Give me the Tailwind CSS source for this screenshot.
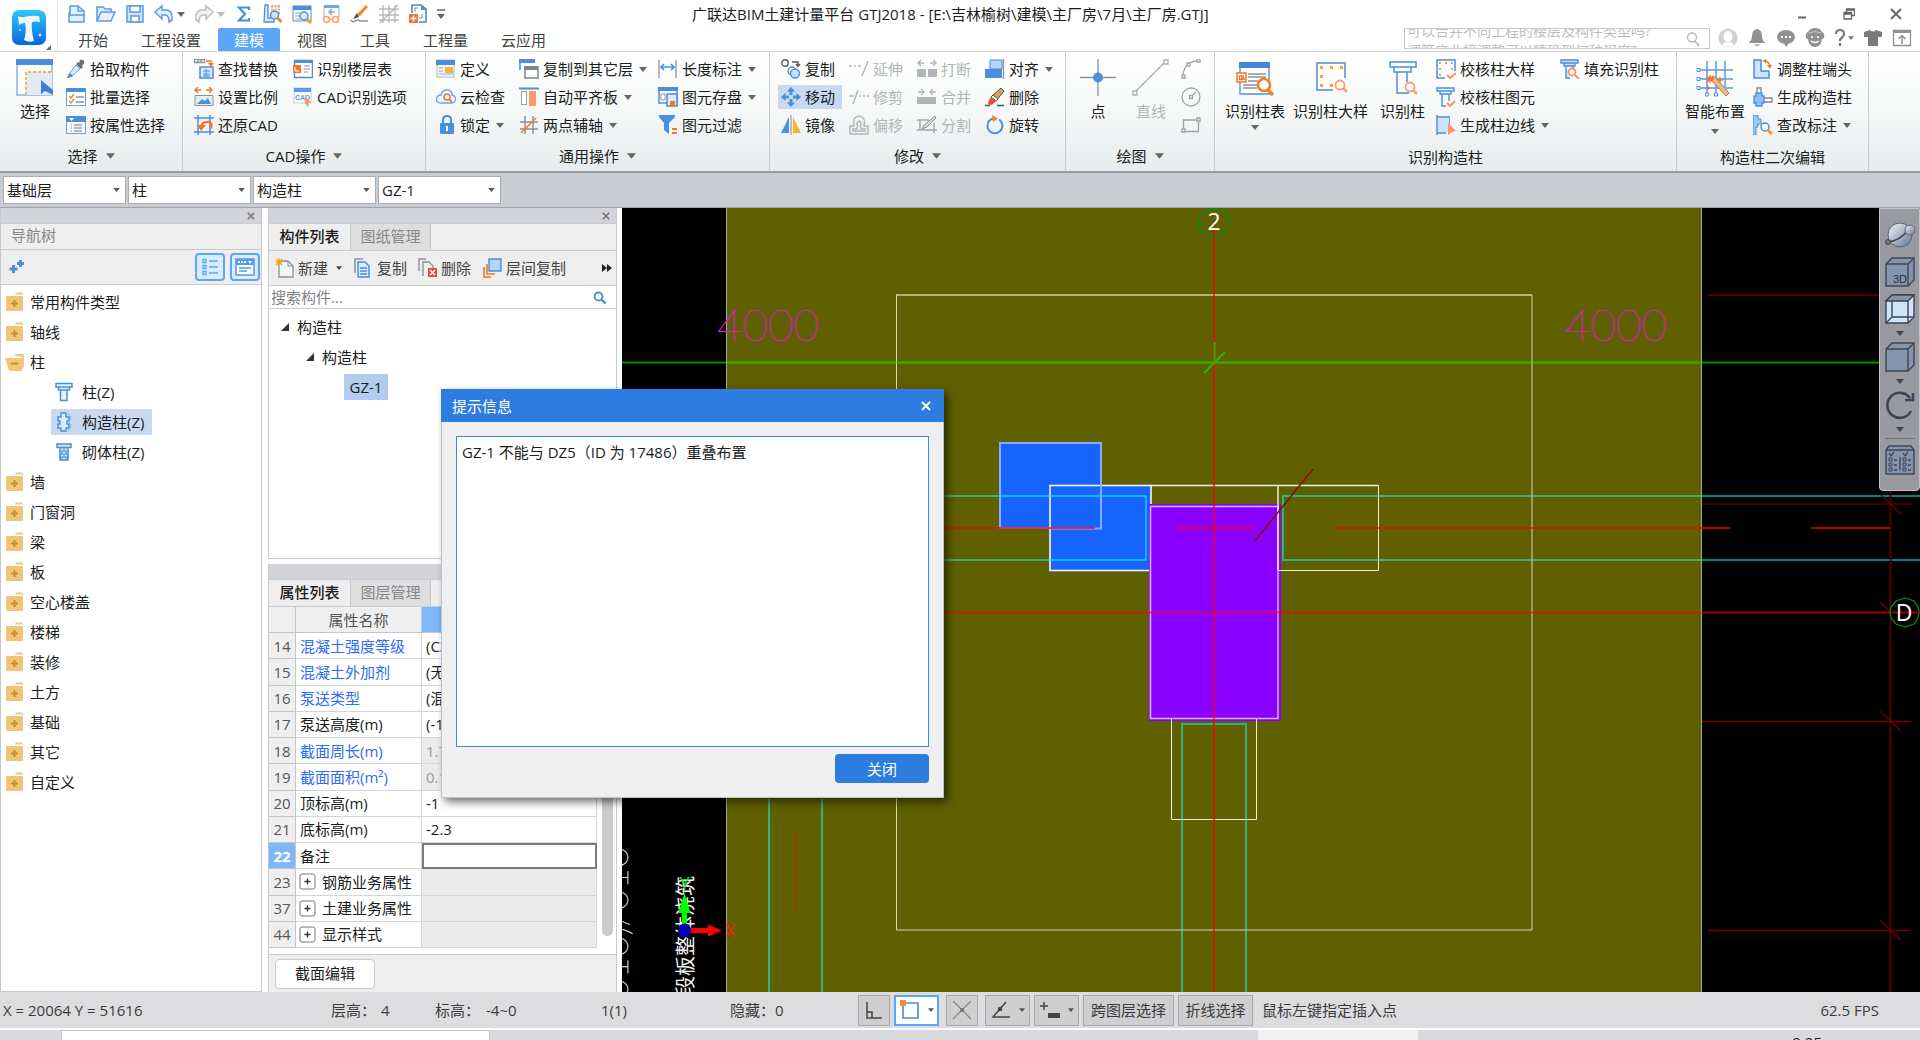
<!DOCTYPE html>
<html lang="zh-CN">
<head>
<meta charset="utf-8">
<title>广联达BIM土建计量平台 GTJ2018</title>
<script src="https://cdn.jsdelivr.net/npm/@tailwindcss/browser@4"></script>
</head>
<body class="h-screen overflow-hidden flex flex-col bg-white text-[15px] leading-5 text-[#1c1c1c] font-['Open_Sans','Noto_Sans_CJK_SC',sans-serif] whitespace-nowrap">

<!-- shared glyphs -->
<svg class="hidden" aria-hidden="true">
  <symbol id="caret" viewBox="0 0 8 5"><path d="M0 0h8L4 5z" fill="currentColor"/></symbol>
  <symbol id="folder" viewBox="0 0 20 20"><path d="M10 2l1-1.500h6l1.500 2h-8.500z" fill="#e9c98c"/><rect x="1" y="4" width="17" height="15" rx="1" fill="#efc578"/><path d="M9.500 8v7M6 11.500h7" stroke="#c98f2b" stroke-width="2.200"/></symbol>
  <symbol id="folderopen" viewBox="0 0 20 20"><path d="M9 4l2-2h8v13l-2 2V5z" fill="#e9c98c"/><path d="M0 6h17v13H4z" fill="#efc578"/><path d="M6 11.500h7" stroke="#c98f2b" stroke-width="2"/></symbol>
  <symbol id="column" viewBox="0 0 20 20"><path d="M2 1.500h16v3.500H2zM4.500 5h11v3h-11zM6.500 8h6.500v10.500H6.500z" fill="#eaf3fd" stroke="#4a8fdc" stroke-width="1.500"/></symbol>
  <symbol id="plusbox" viewBox="0 0 17 17"><rect x="1" y="1" width="15" height="15" rx="2" fill="#fff" stroke="#777"/><path d="M8.500 5.500v6M5.500 8.500h6" stroke="#333" stroke-width="1.300"/></symbol>
  <symbol id="cross" viewBox="0 0 10 10"><path d="M1 1l8 8M9 1L1 9" stroke="currentColor" stroke-width="2"/></symbol>
</svg>

<header class="h-[52px] shrink-0 flex border-b border-[#d4d6d8]">
  <div class="w-[58px] shrink-0 pl-3 pt-2.5 border-r border-[#ececec]">
    <svg class="w-10 h-10" viewBox="0 0 40 40"><defs><linearGradient id="lg" x1="0" y1="0" x2="0" y2="1"><stop offset="0" stop-color="#2fc8fb"/><stop offset="1" stop-color="#0a66dd"/></linearGradient></defs><rect x="0" y="0" width="34" height="35" rx="7" fill="url(#lg)"/><path d="M6 6q3 2 6 1 8-2 15-1l1 6q-4-1-8 0-1 8 2 19-5 2-10-1 3-9 1-17-4 0-6 2z" fill="#eef8ff"/><circle cx="8" cy="20" r="1" fill="#bfe6ff"/><circle cx="28" cy="25" r="1.500" fill="#bfe6ff"/><path d="M39 35v5h-5z" fill="#666"/></svg>
  </div>
  <div class="flex-1 flex flex-col min-w-0">
    <div class="h-7 flex items-center">
      <div class="w-[634px] shrink-0 pl-[9px] flex items-center gap-[9px]">
        <button aria-label="新建"><svg class="block w-5 h-5" viewBox="0 0 20 20"><path d="M3 2h8l6 5v11H2V9h1z" fill="#e3effc" stroke="#5b9be4" stroke-width="1.500"/><path d="M11 2v5h6M2 11h16" fill="none" stroke="#5b9be4" stroke-width="1.500"/></svg></button>
        <button aria-label="打开"><svg class="block w-5 h-5" viewBox="0 0 20 20"><path d="M1 17V3h6l2 2h6v3h4l-4 9zM1 17L5 8h11" fill="#e3effc" stroke="#5b9be4" stroke-width="1.500"/></svg></button>
        <button aria-label="保存"><svg class="block w-5 h-5" viewBox="0 0 20 20"><path d="M2 2h16v16H2z" fill="#cfe2f8" stroke="#5b9be4" stroke-width="1.500"/><path d="M5 2h10v6H5zM6 12h8v6H6z" fill="#fff" stroke="#5b9be4" stroke-width="1.500"/></svg></button>
        <div class="flex items-center gap-[3px] text-[#666]"><button aria-label="撤销"><svg class="block w-5 h-5" viewBox="0 0 20 20"><path d="M1 8l7-6v4h5q6 1 5 10l-3 2q0-7-4-7H8v4z" fill="#e3effc" stroke="#5b9be4" stroke-width="1.500"/></svg></button><svg class="w-2 h-[5px]"><use href="#caret"/></svg></div>
        <div class="flex items-center gap-[3px] text-[#bbb]"><button aria-label="重做"><svg class="block w-5 h-5" viewBox="0 0 20 20"><path d="M19 8l-7-6v4H7q-6 1-5 10l3 2q0-7 4-7h3v4z" fill="#f2f2f2" stroke="#b9bcc0" stroke-width="1.500"/></svg></button><svg class="w-2 h-[5px]"><use href="#caret"/></svg></div>
        <button aria-label="汇总"><svg class="block w-5 h-5" viewBox="0 0 20 20"><path d="M15 6V3.500H5L11 10l-6 6.500h10V14" fill="none" stroke="#4a8fdc" stroke-width="2.200"/></svg></button>
        <button aria-label="查看计算式"><svg class="block w-5 h-5" viewBox="0 0 20 20"><path d="M2 1h3v13h6v4H1z" fill="#dceafb" stroke="#4a8fdc" stroke-width="1.300"/><rect x="8" y="1" width="9" height="9" fill="#f7a578"/><path d="M8 4h9M8 7h9M11 1v9M14 1v9" stroke="#fff"/><circle cx="11.500" cy="11" r="4" fill="#cfe2f8" stroke="#4a8fdc" stroke-width="1.500"/><path d="M14.500 14l4 4" stroke="#f08a24" stroke-width="3"/></svg></button>
        <button aria-label="查看工程量"><svg class="block w-5 h-5" viewBox="0 0 20 20"><rect x="1" y="2" width="18" height="15" fill="#fff" stroke="#4a8fdc"/><path d="M1 2h18v4H1z" fill="#4a8fdc"/><path d="M3 9h6M3 12h5M3 15h5" stroke="#9aa"/><circle cx="12" cy="12" r="4" fill="#dceafb" stroke="#4a8fdc" stroke-width="1.500"/><path d="M15 15l4 4" stroke="#f7a021" stroke-width="3"/></svg></button>
        <button aria-label="对比"><svg class="block w-5 h-5" viewBox="0 0 20 20"><path d="M3 13V2h15v11" fill="none" stroke="#8cb8ea"/><path d="M3 1h15v3H3z" fill="#6aa6e8"/><path d="M14 8H8m3-3L8 8l3 3" fill="none" stroke="#9aa3ad" stroke-width="1.500"/><circle cx="5.500" cy="15.500" r="3" fill="none" stroke="#ff9a66" stroke-width="1.500"/><circle cx="14.500" cy="15.500" r="3" fill="none" stroke="#ff9a66" stroke-width="1.500"/><path d="M8 15h4" stroke="#ff9a66"/></svg></button>
        <button aria-label="画笔"><svg class="block w-5 h-5" viewBox="0 0 20 20"><path d="M16 1l2 2-8 9-4-1z" fill="#f58a2c"/><path d="M7 9l-4 6 6-2z" fill="#555"/><path d="M1 16q2 3 4 1t5 0h8" fill="none" stroke="#8d959c" stroke-width="1.500"/></svg></button>
        <button aria-label="轴网"><svg class="block w-5 h-5" viewBox="0 0 20 20"><path d="M4 1v18M10 1v18M16 1v18M0 5h20M0 11h20M0 16h20M1 19L19 1" stroke="#b5b8bb" stroke-width="1.300"/></svg></button>
        <button aria-label="插入图纸"><svg class="block w-5 h-5" viewBox="0 0 20 20"><path d="M4 9V1h9l5 4v13h-7" fill="#fff" stroke="#4a8fdc" stroke-width="1.600"/><path d="M13 1v5h5z" fill="#4a8fdc"/><path d="M7 8V4h3M14 10v4h-3" fill="none" stroke="#7d8790"/><rect x="1" y="10" width="9" height="9" fill="#f2762a"/><path d="M5.500 11.500v6M2.500 14.500h6" stroke="#fff" stroke-width="1.500"/></svg></button>
        <svg class="w-2 h-3 text-[#666]" viewBox="0 0 8 12"><path d="M0 2h8" stroke="currentColor" stroke-width="1.500"/><path d="M0 6h8l-4 5z" fill="currentColor"/></svg>
      </div>
      <h1>广联达BIM土建计量平台 GTJ2018 - [E:\吉林榆树\建模\主厂房\7月\主厂房.GTJ]</h1>
      <div class="ml-auto pr-[18px] flex items-center gap-[35px] text-[#666]">
        <button aria-label="最小化"><svg class="block w-3 h-3" viewBox="0 0 12 12"><path d="M2 9.500h8" stroke="currentColor" stroke-width="2"/></svg></button>
        <button aria-label="还原"><svg class="block w-3 h-3" viewBox="0 0 12 12"><path d="M3.500 4V1h8v6.500H9M1 4.500h7.500V11H1zM1 6h8M3.500 2h8" fill="none" stroke="currentColor" stroke-width="1.300"/></svg></button>
        <button aria-label="关闭"><svg class="block w-3 h-3" viewBox="0 0 12 12"><path d="M1 1l10 10M11 1L1 11" stroke="currentColor" stroke-width="1.800"/></svg></button>
      </div>
    </div>
    <div class="h-[23px] flex">
      <nav class="pl-1 flex gap-px leading-[22px] text-[#444]">
        <button class="px-4">开始</button><button class="px-4">工程设置</button><button class="px-4 bg-[#5aa7f7] text-white rounded-t-xs">建模</button><button class="px-4">视图</button><button class="px-4">工具</button><button class="px-4">工程量</button><button class="px-4">云应用</button>
      </nav>
      <div class="ml-auto pr-2 flex items-start gap-2">
        <label class="relative w-[306px] h-[21px] flex border border-[#c9cbcd] overflow-hidden">
          <span class="absolute left-0.5 -top-2 text-sm leading-5 text-[#bcbec0]">可以合并不同工程的楼层及构件类型吗?<br>调筋底业接调整可以精确到何种程度?</span>
          <input type="text" aria-label="搜索帮助" class="w-full bg-transparent outline-none">
          <svg class="absolute right-2 top-0.5 w-4 h-4" viewBox="0 0 16 16"><circle cx="7" cy="6.500" r="4.500" fill="none" stroke="#b5b8bb" stroke-width="1.400"/><path d="M10 10l4 5" stroke="#b5b8bb" stroke-width="1.800"/></svg>
        </label>
        <div class="flex items-center gap-[9px]">
          <button aria-label="用户"><svg class="block w-5 h-5" viewBox="0 0 20 20"><circle cx="10" cy="10" r="9.500" fill="#cfd0d2"/><ellipse cx="10" cy="8.500" rx="4.500" ry="5.500" fill="#fff"/><path d="M4 18q1-4 6-4t6 4q-6 3-12 0z" fill="#fff"/></svg></button>
          <button aria-label="通知"><svg class="block w-5 h-5" viewBox="0 0 20 20"><path d="M10 1q5 1 5 7 0 4 3 7H2q3-3 3-7 0-6 5-7z" fill="#8f9193"/><path d="M7 16.500h6q-3 3-6 0z" fill="#8f9193"/></svg></button>
          <button aria-label="消息"><svg class="block w-5 h-5" viewBox="0 0 20 20"><ellipse cx="10" cy="9" rx="9" ry="7" fill="#8f9193"/><path d="M8 15l2 4 3-4z" fill="#8f9193"/><path d="M5 9h2M9 9h2M13 9h2" stroke="#fff" stroke-width="2"/></svg></button>
          <button aria-label="客服"><svg class="block w-5 h-5" viewBox="0 0 20 20"><path d="M3 4q2-4 7-4t7 4q3 1 2 6l-2 1q-1 8-7 8t-7-8l-2-1Q0 5 3 4z" fill="#8f9193"/><path d="M4 5q6-3 12 0" fill="none" stroke="#c9cacc"/><path d="M6 9h2M12 9h2M6 13q4 3 8 0" fill="none" stroke="#fff" stroke-width="1.500"/></svg></button>
          <button aria-label="帮助" class="flex items-center text-[#77797b]"><svg class="block w-3 h-5" viewBox="0 0 12 20"><path d="M2 6q0-4 4-4t4 4q0 2-2 3.500t-2 3.500M6 15v3" fill="none" stroke="currentColor" stroke-width="2.200"/></svg><svg class="w-1.5 h-1 ml-0.5"><use href="#caret"/></svg></button>
          <button aria-label="皮肤"><svg class="block w-5 h-5" viewBox="0 0 20 20"><path d="M1 4l6-2q3 3 6 0l6 2v5h-4v9H5V9H1z" fill="#77797b"/></svg></button>
          <button aria-label="收起功能区"><svg class="block w-5 h-5" viewBox="0 0 20 20"><path d="M1.500 2.500h17v15h-17z" fill="none" stroke="#8f9193" stroke-width="1.300"/><path d="M1 2h18v3H1z" fill="#8f9193"/><path d="M10 16V8M6.500 11L10 7.500l3.500 3.500" fill="none" stroke="#8f9193" stroke-width="1.500"/></svg></button>
        </div>
      </div>
    </div>
  </div>
</header>

<!-- ribbon -->
<div class="h-[121px] shrink-0 flex bg-linear-to-b from-white via-[#f6f8f8] to-[#e6ebec] border-b-2 border-[#979a9e]">

  <section class="w-[183px] shrink-0 pt-[3px] border-r border-[#c9cccf]">
    <div class="h-[84px] flex gap-3 pl-4">
      <button class="w-[38px] pt-1 flex flex-col items-center leading-7">
        <svg class="w-[38px] h-[38px]" viewBox="0 0 38 38"><rect x="1" y="1" width="35" height="35" fill="#fff" stroke="#4a8fdc"/><path d="M0 0h37v6H0z" fill="#4a8fdc"/><path d="M10 13h26v23H10z" fill="#e4e9f5"/><path d="M10 36V13h26" fill="none" stroke="#f2b53a" stroke-width="1.800" stroke-dasharray="3 2"/><path d="M25 21v14l4-3 8 4V31z" fill="#3f7fd0"/></svg>选择</button>
      <div class="flex flex-col">
        <button class="h-7 flex items-center gap-1"><svg class="w-5 h-5" viewBox="0 0 20 20"><path d="M14 1q3-1 4 1t-2 5l1 1-2 2-5-5 2-2 1 1z" fill="#6b7074"/><path d="M10 6l4 4-8 7-4 1 1-3z" fill="#d6e9fb" stroke="#7aa7d6"/><path d="M4 14l3 3-4 2H1z" fill="#4a8fdc"/></svg>拾取构件</button>
        <button class="h-7 flex items-center gap-1"><svg class="w-5 h-5" viewBox="0 0 20 20"><rect x=".5" y="1.500" width="19" height="17" fill="#fff" stroke="#6f9fd6"/><path d="M0 1h20v4H0z" fill="#4a8fdc"/><path d="M3 9l2 2 3-4M3 14l2 2 3-4" fill="none" stroke="#f08a24" stroke-width="1.400"/><path d="M10 10h8M10 15h8" stroke="#8b9299" stroke-width="1.300"/></svg>批量选择</button>
        <button class="h-7 flex items-center gap-1"><svg class="w-5 h-5" viewBox="0 0 20 20"><rect x=".5" y="1.500" width="19" height="17" fill="#f5f9fe" stroke="#6f9fd6"/><path d="M0 1h20v6H0z" fill="#4a8fdc"/><path d="M3 3h5l-2.500 3z" fill="#fff"/><path d="M8 10h8M8 13h8M8 16h8M5 10h1M5 13h1M5 16h1" stroke="#777" stroke-width="1.200"/></svg>按属性选择</button>
      </div>
    </div>
    <button class="w-full h-[33px] flex items-center justify-center gap-2">选择<svg class="w-[9px] h-1.5 text-[#666]"><use href="#caret"/></svg></button>
  </section>

  <section class="w-[243px] shrink-0 pt-[3px] border-r border-[#c9cccf]">
    <div class="h-[84px] flex gap-[15px] pl-[11px]">
      <div class="flex flex-col">
        <button class="h-7 flex items-center gap-1"><svg class="w-5 h-5" viewBox="0 0 20 20"><path d="M.5.500h10v3H.5zM4 0v4M7 0v4" fill="none" stroke="#8b9299" stroke-width="1.300"/><path d="M12 2h5v4" fill="none" stroke="#f2762a" stroke-width="1.400"/><path d="M14 4h6l-3 4z" fill="#f2762a"/><rect x="6" y="8" width="13" height="11" fill="#dceafb" stroke="#4a8fdc" stroke-width="1.500"/><path d="M9 12h7M9 15h7M9 17h7M12 10v8" stroke="#4a8fdc"/></svg>查找替换</button>
        <button class="h-7 flex items-center gap-1"><svg class="w-5 h-5" viewBox="0 0 20 20"><path d="M1 3h6M4 0L1 3l3 3M12 3h6M15 0l3 3-3 3" fill="none" stroke="#f2762a" stroke-width="1.400"/><path d="M1 8.500h18v10H1z" fill="#e9eef4" stroke="#8b9299"/><path d="M3 17l5-5 3 2 3-3 3 6z" fill="#4a8fdc"/></svg>设置比例</button>
        <button class="h-7 flex items-center gap-1"><svg class="w-5 h-5" viewBox="0 0 20 20"><path d="M4 0v20M16 0v20M0 3h20M0 17h20" stroke="#4a8fdc" stroke-width="1.500"/><path d="M7 12q1-6 9-5 3 3 0 7" fill="none" stroke="#f2762a" stroke-width="2.400"/><path d="M3 10h9l-5 6z" fill="#f2762a"/></svg>还原CAD</button>
      </div>
      <div class="flex flex-col">
        <button class="h-7 flex items-center gap-1"><svg class="w-5 h-5" viewBox="0 0 20 20"><rect x="1.500" y="1.500" width="18" height="17" fill="#fff" stroke="#4a8fdc" stroke-width="1.500"/><path d="M1 1h19v3H1z" fill="#4a8fdc"/><rect x="0" y="6" width="8" height="8" fill="#f2762a"/><path d="M11 7h6M11 10h6M11 13h4" stroke="#8b9299"/><path d="M2 8v4h4" stroke="#fff" fill="none"/></svg>识别楼层表</button>
        <button class="h-7 flex items-center gap-1"><svg class="w-5 h-5" viewBox="0 0 20 20"><rect x="1" y="1" width="17" height="15" fill="#fff" stroke="#b9d2ef"/><path d="M1 1h17v4H1z" fill="#5b9be4"/><text x="2" y="13" font-size="7" font-weight="bold" fill="#5b9be4" font-family="Liberation Sans">CAD</text><path d="M12 10l6 5-3 1 1 3-2 .500-1-3-1 1z" fill="#ff9068"/></svg>CAD识别选项</button>
      </div>
    </div>
    <button class="w-full h-[33px] flex items-center justify-center gap-2">CAD操作<svg class="w-[9px] h-1.5 text-[#666]"><use href="#caret"/></svg></button>
  </section>

  <section class="w-[344px] shrink-0 pt-[3px] border-r border-[#c9cccf]">
    <div class="h-[84px] flex pl-2.5">
      <div class="w-[83px] flex flex-col">
        <button class="h-7 flex items-center gap-1"><svg class="w-5 h-5" viewBox="0 0 20 20"><rect x="1" y="1" width="17" height="17" fill="#f3f5f8" stroke="#b5bcc4"/><path d="M0 1h19v5H0z" fill="#4a8fdc"/><path d="M3 9h4M3 12h4M3 15h14" stroke="#9aa3ad"/><rect x="9" y="8" width="8" height="6" fill="#f7b23b"/></svg>定义</button>
        <button class="h-7 flex items-center gap-1"><svg class="w-5 h-5" viewBox="0 0 20 20"><path d="M5 16q-5 0-4.500-4T5 8q1-5 6-5t5 5q4 1 3.500 4.500T16 16z" fill="#eef6ff" stroke="#5aa7f7" stroke-width="1.300"/><circle cx="11" cy="10" r="3" fill="none" stroke="#f2762a" stroke-width="1.500"/><path d="M13 12l3 3" stroke="#f2762a" stroke-width="1.800"/></svg>云检查</button>
        <button class="h-7 flex items-center gap-1"><svg class="w-5 h-5" viewBox="0 0 20 20"><path d="M7 9V5q0-4 4-4t4 4v4" fill="none" stroke="#4a8fdc" stroke-width="2"/><rect x="4" y="8" width="14" height="11" rx="1" fill="#4a8fdc"/><path d="M11 11v5" stroke="#fff" stroke-width="2"/></svg>锁定<svg class="w-2 h-[5px] ml-0.5 text-[#666]"><use href="#caret"/></svg></button>
      </div>
      <div class="w-[139px] flex flex-col">
        <button class="h-7 flex items-center gap-1"><svg class="w-5 h-5" viewBox="0 0 20 20"><path d="M1 11V1h14v3" fill="#fff" stroke="#4a8fdc" stroke-width="1.600"/><path d="M0 0h16v4H0z" fill="#4a8fdc"/><rect x="6" y="8" width="13" height="11" fill="#fff" stroke="#7d8790" stroke-width="1.500"/><path d="M5 7h14v4H5z" fill="#7d8790"/></svg>复制到其它层<svg class="w-2 h-[5px] ml-0.5 text-[#666]"><use href="#caret"/></svg></button>
        <button class="h-7 flex items-center gap-1"><svg class="w-5 h-5" viewBox="0 0 20 20"><path d="M0 1.500h20" stroke="#4a8fdc" stroke-width="2"/><rect x="2.500" y="4.500" width="5" height="13" fill="#fff" stroke="#9aa3ad"/><rect x="10" y="4" width="7" height="15" fill="#f99a6c"/></svg>自动平齐板<svg class="w-2 h-[5px] ml-0.5 text-[#666]"><use href="#caret"/></svg></button>
        <button class="h-7 flex items-center gap-1"><svg class="w-5 h-5" viewBox="0 0 20 20"><path d="M6 1v18M14 1v18M1 7h18M1 14h18" stroke="#8b9299" stroke-width="1.500"/><path d="M2 18L17 3" stroke="#f2762a" stroke-width="1.500"/></svg>两点辅轴<svg class="w-2 h-[5px] ml-0.5 text-[#666]"><use href="#caret"/></svg></button>
      </div>
      <div class="flex flex-col">
        <button class="h-7 flex items-center gap-1"><svg class="w-5 h-5" viewBox="0 0 20 20"><path d="M1 1v18M18 1v18" stroke="#9aa3ad" stroke-width="1.500"/><path d="M3 8h13M6 5L3 8l3 3M13 5l3 3-3 3" fill="none" stroke="#4a8fdc" stroke-width="1.700"/></svg>长度标注<svg class="w-2 h-[5px] ml-0.5 text-[#666]"><use href="#caret"/></svg></button>
        <button class="h-7 flex items-center gap-1"><svg class="w-5 h-5" viewBox="0 0 20 20"><path d="M1 1h18v15H1z" fill="#fff" stroke="#4a8fdc" stroke-width="1.500"/><path d="M0 0h20v4H0z" fill="#4a8fdc"/><path d="M3 7h4v6H3z" fill="none" stroke="#8b9299"/><path d="M9 7h10v12H9z" fill="#dceafb" stroke="#4a8fdc" stroke-width="1.500"/><path d="M12 14h5v5h-5z" fill="#f2762a"/></svg>图元存盘<svg class="w-2 h-[5px] ml-0.5 text-[#666]"><use href="#caret"/></svg></button>
        <button class="h-7 flex items-center gap-1"><svg class="w-5 h-5" viewBox="0 0 20 20"><path d="M1 0h16v2l-6 6v11l-5-4V8L1 2z" fill="#4a8fdc"/><path d="M14 14h5M14 18h5" stroke="#f2762a" stroke-width="1.800"/></svg>图元过滤</button>
      </div>
    </div>
    <button class="w-full h-[33px] flex items-center justify-center gap-2">通用操作<svg class="w-[9px] h-1.5 text-[#666]"><use href="#caret"/></svg></button>
  </section>

  <section class="w-[296px] shrink-0 pt-[3px] border-r border-[#c9cccf]">
    <div class="h-[84px] pl-2 flex gap-0.5">
      <div class="w-[66px] flex flex-col">
        <button class="h-7 pl-[3px] flex items-center gap-1"><svg class="w-5 h-5" viewBox="0 0 20 20"><circle cx="4" cy="4" r="3.200" fill="#fff" stroke="#555" stroke-width="1.400"/><path d="M11 3h6v4M15 5l2 2.500L19 5" fill="none" stroke="#555" stroke-width="1.400"/><circle cx="11" cy="12" r="4" fill="#fff" stroke="#4a8fdc" stroke-width="1.400"/><circle cx="14" cy="14.500" r="4.500" fill="#bfe2fb" stroke="#4a8fdc" stroke-width="1.400"/></svg>复制</button>
        <button class="h-6 my-0.5 w-16 pl-[3px] flex items-center gap-1 bg-[#c8daf2]"><svg class="w-5 h-5" viewBox="0 0 20 20"><path d="M10 0l4 4.500h-2.500V8h-3V4.500H6zM10 20l-4-4.500h2.500V12h3v3.500H14zM0 10l4.500-4v2.500H8v3H4.500V14zM20 10l-4.500 4v-2.500H12v-3h3.500V6z" fill="#4a8fdc"/></svg>移动</button>
        <button class="h-7 pl-[3px] flex items-center gap-1"><svg class="w-5 h-5" viewBox="0 0 20 20"><path d="M8 2v16H0z" fill="#4a8fdc"/><path d="M10 0v20" stroke="#9aa3ad" stroke-width="1.300"/><path d="M12 2v16h8z" fill="#f7b52c"/></svg>镜像</button>
      </div>
      <div class="w-[66px] flex flex-col text-[#b2b5b8]">
        <button disabled class="h-7 pl-[3px] flex items-center gap-1"><svg class="w-5 h-5" viewBox="0 0 20 20" fill="none" stroke="#b2b5b8" stroke-width="1.400"><path d="M0 7h3M5 7h2M9 7h3M19 2l-6 15"/></svg>延伸</button>
        <button disabled class="h-7 pl-[3px] flex items-center gap-1"><svg class="w-5 h-5" viewBox="0 0 20 20" fill="none" stroke="#b2b5b8" stroke-width="1.400"><path d="M0 9h5M10 9h2M14 9h2M18 9h2M9 3L4 17"/></svg>修剪</button>
        <button disabled class="h-7 pl-[3px] flex items-center gap-1"><svg class="w-5 h-5" viewBox="0 0 20 20" fill="none" stroke="#b2b5b8" stroke-width="1.500"><path d="M5 11H1v8h18v-8h-4q2-9-5-10-7 1-5 10z"/><path d="M4 16h12v-2h-4q-1-3 0-6-2-4-4 0 1 3 0 6H4z"/></svg>偏移</button>
      </div>
      <div class="w-[66px] flex flex-col text-[#b2b5b8]">
        <button disabled class="h-7 pl-[3px] flex items-center gap-1"><svg class="w-5 h-5" viewBox="0 0 20 20"><path d="M0 10h9v8H0zM11 10h9v8h-9z" fill="#b2b5b8"/><path d="M1 4h6M4 1L1 4l3 3M19 4h-6M16 1l3 3-3 3" fill="none" stroke="#b2b5b8" stroke-width="1.400"/></svg>打断</button>
        <button disabled class="h-7 pl-[3px] flex items-center gap-1"><svg class="w-5 h-5" viewBox="0 0 20 20"><path d="M0 10h19v7H0z" fill="#b2b5b8"/><path d="M1 5h6M4 2l3 3-3 3M19 5h-6M16 2l-3 3 3 3" fill="none" stroke="#b2b5b8" stroke-width="1.400"/></svg>合并</button>
        <button disabled class="h-7 pl-[3px] flex items-center gap-1"><svg class="w-5 h-5" viewBox="0 0 20 20"><path d="M0 5h12M3 5v10M0 15h20M17 8v10" fill="none" stroke="#a5a8ab" stroke-width="1.500"/><path d="M18 1l-11 9-2 4 5-2L19 3z" fill="#d5d7d9" stroke="#8e9194"/></svg>分割</button>
      </div>
      <div class="flex flex-col">
        <button class="h-7 pl-[3px] flex items-center gap-1"><svg class="w-5 h-5" viewBox="0 0 20 20"><path d="M5 1h12v9H5z" fill="#b7d3f4" stroke="#4a8fdc"/><path d="M0 10h17v9H0z" fill="#4a8fdc"/><path d="M18.500 0v20" stroke="#8b9299" stroke-width="1.300"/></svg>对齐<svg class="w-2 h-[5px] ml-0.5 text-[#666]"><use href="#caret"/></svg></button>
        <button class="h-7 pl-[3px] flex items-center gap-1"><svg class="w-5 h-5" viewBox="0 0 20 20"><path d="M16 1l3 3-8 10-5-4z" fill="#d9a365" stroke="#6b4a25"/><path d="M8 8l5 4-2 2-5-4z" fill="#fff" stroke="#555"/><path d="M6 10l5 4q-3 4-6 4-4-1 1-8z" fill="#e2562f"/><path d="M0 18.500h5M12 18.500h7" stroke="#555" stroke-width="1.300"/></svg>删除</button>
        <button class="h-7 pl-[3px] flex items-center gap-1"><svg class="w-5 h-5" viewBox="0 0 20 20"><path d="M14 4.500A7.500 7.500 0 1 1 8 3.500" fill="none" stroke="#4a8fdc" stroke-width="1.900"/><path d="M7 0l6 3.500L8 7z" fill="#f08a24"/></svg>旋转</button>
      </div>
    </div>
    <button class="w-full h-[33px] flex items-center justify-center gap-2">修改<svg class="w-[9px] h-1.5 text-[#666]"><use href="#caret"/></svg></button>
  </section>

  <section class="w-[149px] shrink-0 pt-[3px] border-r border-[#c9cccf]">
    <div class="h-[84px] flex pl-3">
      <button class="w-10 pt-1 flex flex-col items-center leading-7"><svg class="w-[38px] h-[38px]" viewBox="0 0 38 38"><path d="M19 0v37M1 18.500h36" stroke="#8b9299" stroke-width="1.300"/><circle cx="19" cy="18.500" r="5" fill="#4a8fdc"/></svg>点</button>
      <button disabled class="w-10 ml-[13px] pt-1 flex flex-col items-center leading-7 text-[#b2b5b8]"><svg class="w-[38px] h-[38px]" viewBox="0 0 38 38" fill="none" stroke="#a9acaf" stroke-width="1.300"><path d="M4 32L32 4"/><path d="M1 32h4v4H1zM32 1h4v4h-4z"/></svg>直线</button>
      <div class="ml-2.5 flex flex-col">
        <button disabled aria-label="三点弧" class="h-7 flex items-center"><svg class="w-5 h-5" viewBox="0 0 20 20" fill="none" stroke="#a0a3a6" stroke-width="1.300"><path d="M2 16q1-8 5-10M9 4q3-2 7-2"/><path d="M1 16h3v3H1zM6 4h3v3H6zM16 0h3v3h-3z"/></svg></button>
        <button disabled aria-label="圆" class="h-7 flex items-center"><svg class="w-5 h-5" viewBox="0 0 20 20" fill="none" stroke="#a0a3a6" stroke-width="1.300"><circle cx="10" cy="10" r="9"/><path d="M8.500 8.500h3v3h-3zM11 9l4-4"/></svg></button>
        <button disabled aria-label="矩形" class="h-7 flex items-center"><svg class="w-5 h-5" viewBox="0 0 20 20" fill="none" stroke="#a0a3a6" stroke-width="1.300"><path d="M2.500 14V5h13M4 16.500h13.500V6"/><path d="M1 14h3v3H1zM16 3h3v3h-3z"/></svg></button>
      </div>
    </div>
    <button class="w-full h-[33px] flex items-center justify-center gap-2">绘图<svg class="w-[9px] h-1.5 text-[#666]"><use href="#caret"/></svg></button>
  </section>

  <section class="w-[462px] shrink-0 pt-[3px] border-r border-[#c9cccf]">
    <div class="h-[84px] flex pl-2.5">
      <button class="w-[60px] pt-1 flex flex-col items-center leading-7"><svg class="w-[38px] h-[38px]" viewBox="0 0 38 38"><path d="M4 4h29v31H4z" fill="#fff" stroke="#4a8fdc" stroke-width="1.300"/><path d="M3 3h31v6H3z" fill="#3f86dc"/><path d="M12 15h18M12 18h18M12 22h10M7 26h16M7 29h14" stroke="#8b9299" stroke-width="1.300"/><path d="M1 14h9v9H1z" fill="#fff" stroke="#f2762a" stroke-width="1.500"/><path d="M8 17H3.500v3.500H8V19H5" fill="none" stroke="#f2762a" stroke-width="1.300"/><circle cx="28" cy="26" r="6" fill="#fff" stroke="#f08025" stroke-width="2.500"/><path d="M32 31l5 5" stroke="#f08025" stroke-width="3.500"/></svg>识别柱表<svg class="w-2 h-[5px] shrink-0 text-[#666]"><use href="#caret"/></svg></button>
      <button class="w-[75px] ml-2 pt-1 flex flex-col items-center leading-7"><svg class="w-[38px] h-[38px]" viewBox="0 0 38 38"><path d="M33 19V4H5v27h16" fill="none" stroke="#4a8fdc" stroke-width="1.500"/><path d="M8 7h3v3H8zM18 7h3v3h-3zM28 7h3v3h-3zM8 16h3v3H8zM8 25h3v3H8zM18 25h3v3h-3z" fill="#f5a623"/><circle cx="28" cy="26" r="4.500" fill="#fff" stroke="#ff9a70" stroke-width="1.800"/><path d="M31 29l4 4" stroke="#ff9a70" stroke-width="2.500"/></svg>识别柱大样</button>
      <button class="w-[45px] ml-3 pt-1 flex flex-col items-center leading-7"><svg class="w-[38px] h-[38px]" viewBox="0 0 38 38" fill="none" stroke="#4a8fdc" stroke-width="1.500"><path d="M6 3h26v5H6zM10 8h17v5H10zM23 13v10M13 13v21h12"/><circle cx="26" cy="28" r="4.500" fill="#fff" stroke="#ff9a70" stroke-width="1.800"/><path d="M29 31l4 4" stroke="#ff9a70" stroke-width="2.500"/></svg>识别柱</button>
      <div class="w-[124px] ml-[11px] flex flex-col">
        <button class="h-7 flex items-center gap-1"><svg class="w-5 h-5" viewBox="0 0 20 20"><path d="M19 12V1H1v18h8" fill="none" stroke="#4a8fdc" stroke-width="1.500"/><path d="M3 3h2v2H3zM9 3h2v2H9zM15 3h2v2h-2zM3 9h2v2H3zM3 15h2v2H3zM15 9h2v2h-2z" fill="#f5a623"/><path d="M11 16l3 3 6-5" fill="none" stroke="#ff9068" stroke-width="1.800"/></svg>校核柱大样</button>
        <button class="h-7 flex items-center gap-1"><svg class="w-5 h-5" viewBox="0 0 20 20" fill="none" stroke="#4a8fdc" stroke-width="1.400"><path d="M1 1h17v3H1zM4 4h11v3H4zM6 7v12h4M13 7v7"/><path d="M11 16l3 3 5-5" stroke="#ff9068" stroke-width="1.800"/></svg>校核柱图元</button>
        <button class="h-7 flex items-center gap-1"><svg class="w-5 h-5" viewBox="0 0 20 20"><path d="M1 0v20M1 2h12v8M1 18h9" fill="none" stroke="#4a8fdc" stroke-width="1.500"/><path d="M2 3h11v14H2z" fill="#cfe2fb"/><path d="M12 8l8 8-4 1-4 3z" fill="#ff9068"/></svg>生成柱边线<svg class="w-2 h-[5px] ml-0.5 text-[#666]"><use href="#caret"/></svg></button>
      </div>
      <div class="flex flex-col">
        <button class="h-7 flex items-center gap-1"><svg class="w-5 h-5" viewBox="0 0 20 20"><path d="M1 1h17v3H1zM4 4h11v3H4zM6 7v12h4M13 7v4" fill="#cfe2fb" stroke="#4a8fdc" stroke-width="1.400"/><circle cx="12" cy="13" r="3.500" fill="#fff" stroke="#ff9068" stroke-width="1.800"/><path d="M15 16l4 4" stroke="#ff9068" stroke-width="2"/></svg>填充识别柱</button>
      </div>
    </div>
    <div class="h-[33px] pt-2 text-center">识别构造柱</div>
  </section>

  <section class="w-[192px] shrink-0 pt-[3px] border-r border-[#c9cccf]">
    <div class="h-[84px] flex pl-2">
      <button class="w-[60px] pt-1 flex flex-col items-center leading-7"><svg class="w-[38px] h-[38px]" viewBox="0 0 38 38"><path d="M11 2v32M20 2v32M29 2v26M3 11h34M3 20h34M3 29h34" stroke="#5b9be4" stroke-width="1.500"/><path d="M1 9.500h3v3H1zM1 18.500h3v3H1zM1 27.500h3v3H1zM9.500 34h3v3h-3zM18.500 34h3v3h-3z" fill="#fff" stroke="#4a8fdc"/><path d="M17 17l3 2 13 15-3 3-14-15z" fill="#e9b884" stroke="#b57b3d"/><path d="M14 16v8M10 20h8M11 17l6 6M17 17l-6 6M24 18v6M21 21h6M12 27v4M10 29h4" stroke="#f2762a" stroke-width="1.300"/></svg>智能布置<svg class="w-2 h-[5px] mt-1 shrink-0 text-[#666]"><use href="#caret"/></svg></button>
      <div class="ml-2 flex flex-col">
        <button class="h-7 flex items-center gap-1"><svg class="w-5 h-5" viewBox="0 0 20 20"><path d="M1 1h7v11h8v7H1z" fill="#cfe2fb" stroke="#4a8fdc" stroke-width="1.500"/><path d="M11 2q5 0 6 5" fill="none" stroke="#f2762a" stroke-width="1.500"/><path d="M14 6h5l-2 4zM9 2l4-2v4z" fill="#f2762a"/></svg>调整柱端头</button>
        <button class="h-7 flex items-center gap-1"><svg class="w-5 h-5" viewBox="0 0 20 20"><path d="M4 1h4v6H4zM10 11h9v4h-9z" fill="#fff" stroke="#7d8790" stroke-width="1.300"/><path d="M3 6h6v3h2v7H9v3H3v-3H1V9h2z" fill="#8fbdf2" stroke="#4a8fdc" stroke-width="1.300"/></svg>生成构造柱</button>
        <button class="h-7 flex items-center gap-1"><svg class="w-5 h-5" viewBox="0 0 20 20"><path d="M0 0h5v4h3v5H5v3H3v8H0z" fill="#9fc6f3" stroke="#4a8fdc"/><circle cx="12" cy="12" r="4" fill="#fff" stroke="#4a8fdc" stroke-width="1.500"/><path d="M15 15l4 4" stroke="#f7a021" stroke-width="3"/></svg>查改标注<svg class="w-2 h-[5px] ml-0.5 text-[#666]"><use href="#caret"/></svg></button>
      </div>
    </div>
    <div class="h-[33px] pt-2 text-center">构造柱二次编辑</div>
  </section>
</div>

<!-- level / component pickers -->
<div class="h-[35px] shrink-0 flex items-center gap-0.5 pl-[3px] bg-[#c9ccd1] border-b border-[#9fa4aa]">
  <label class="relative w-[123px] text-[#555]"><select aria-label="楼层" class="w-full h-7 pl-[3px] appearance-none bg-white border border-[#a9acb0] text-[#1c1c1c]"><option>基础层</option></select><svg class="absolute right-1.5 top-3 w-[7px] h-1"><use href="#caret"/></svg></label>
  <label class="relative w-[123px] text-[#555]"><select aria-label="构件大类" class="w-full h-7 pl-[3px] appearance-none bg-white border border-[#a9acb0] text-[#1c1c1c]"><option>柱</option></select><svg class="absolute right-1.5 top-3 w-[7px] h-1"><use href="#caret"/></svg></label>
  <label class="relative w-[123px] text-[#555]"><select aria-label="构件类型" class="w-full h-7 pl-[3px] appearance-none bg-white border border-[#a9acb0] text-[#1c1c1c]"><option>构造柱</option></select><svg class="absolute right-1.5 top-3 w-[7px] h-1"><use href="#caret"/></svg></label>
  <label class="relative w-[123px] text-[#555]"><select aria-label="构件" class="w-full h-7 pl-[3px] appearance-none bg-white border border-[#a9acb0] text-[#1c1c1c]"><option>GZ-1</option></select><svg class="absolute right-1.5 top-3 w-[7px] h-1"><use href="#caret"/></svg></label>
</div>

<main class="flex-1 min-h-0 flex">
  <!-- navigation tree -->
  <aside class="w-[262px] mr-1.5 shrink-0 flex flex-col border-x border-b border-[#c6c9cd]">
    <div class="h-[15px] shrink-0 pr-1.5 flex items-center justify-end bg-[#d3d4da] text-[#777]"><button aria-label="关闭导航树"><svg class="block w-2 h-2"><use href="#cross"/></svg></button></div>
    <h2 class="h-[27px] shrink-0 pl-2.5 leading-[22px] bg-[#eeeeee] border-y border-[#c9ccd0] text-[#85888b]">导航树</h2>
    <div class="h-[35px] shrink-0 pl-2 pr-px flex items-center bg-[#eeeeee] border-b border-[#c9ccd0]">
      <button aria-label="添加"><svg class="block w-4 h-4" viewBox="0 0 16 16"><path d="M4.500 6v8M.5 10h8M11.500 1v7M8 4.500h7" stroke="#4a8fdc" stroke-width="2.800"/></svg></button>
      <button aria-label="列表视图" class="ml-auto w-[30px] h-[28px] flex items-center justify-center rounded border-2 border-[#5aa7f7] bg-[#dcecfd]"><svg class="w-[18px] h-[18px]" viewBox="0 0 18 18"><path d="M2 1.500h3v3H2zM2 7.500h3v3H2zM2 13.500h3v3H2z" fill="none" stroke="#5aa7f7" stroke-width="1.300"/><path d="M8 3h9M8 9h9M8 15h9" stroke="#5aa7f7" stroke-width="1.600"/></svg></button>
      <button aria-label="图标视图" class="ml-[5px] w-[30px] h-[28px] flex items-center justify-center rounded border-2 border-[#5aa7f7] bg-[#dcecfd]"><svg class="w-5 h-[18px]" viewBox="0 0 20 18"><path d="M1 1h18v16H1z" fill="#fff" stroke="#4f9bf0" stroke-width="1.500"/><path d="M1 1h18v6H1z" fill="#4f9bf0"/><path d="M3 4h2M6 4h2M9 4h2" stroke="#fff" stroke-width="2"/><path d="M13 3h4l-2 3z" fill="#fff"/><path d="M4 10h12M4 13h8" stroke="#4f9bf0" stroke-width="1.500"/></svg></button>
    </div>
    <ul class="flex-1 min-h-0 overflow-hidden pt-0.5 pl-1 leading-[30px]">
      <li class="flex items-center gap-[5px]"><svg class="w-5 h-5"><use href="#folder"/></svg>常用构件类型</li>
      <li class="flex items-center gap-[5px]"><svg class="w-5 h-5"><use href="#folder"/></svg>轴线</li>
      <li class="flex items-center gap-[5px]"><svg class="w-5 h-5"><use href="#folderopen"/></svg>柱</li>
      <li><ul class="pl-[46px]">
        <li class="h-[30px] flex items-center gap-2 pl-[3px]"><svg class="w-5 h-5"><use href="#column"/></svg>柱(Z)</li>
        <li class="h-[26px] my-0.5 w-[101px] flex items-center gap-2 pl-[3px] bg-[#c8daf2]"><svg class="w-5 h-5" viewBox="0 0 20 20"><path d="M7 1h5v4h3v4h-2v3h2v4h-3v3H7v-3H4v-4h2V9H4V5h3z" fill="#dceafb" stroke="#4a8fdc" stroke-width="1.400"/><path d="M14 2q3 1 3 6M14 18q3-1 3-6" fill="none" stroke="#7fb0ea"/></svg>构造柱(Z)</li>
        <li class="h-[30px] flex items-center gap-2 pl-[3px]"><svg class="w-5 h-5" viewBox="0 0 20 20"><path d="M3 2h14v3.500H3zM6 5.500h8V18H6z" fill="#cfe2fb" stroke="#4a8fdc" stroke-width="1.500"/><path d="M6 9h8M6 12h8M6 15h8M10 6v3M8 9v3M12 9v3M10 12v3M8 15v3M12 15v3" stroke="#4a8fdc"/></svg>砌体柱(Z)</li>
      </ul></li>
      <li class="flex items-center gap-[5px]"><svg class="w-5 h-5"><use href="#folder"/></svg>墙</li>
      <li class="flex items-center gap-[5px]"><svg class="w-5 h-5"><use href="#folder"/></svg>门窗洞</li>
      <li class="flex items-center gap-[5px]"><svg class="w-5 h-5"><use href="#folder"/></svg>梁</li>
      <li class="flex items-center gap-[5px]"><svg class="w-5 h-5"><use href="#folder"/></svg>板</li>
      <li class="flex items-center gap-[5px]"><svg class="w-5 h-5"><use href="#folder"/></svg>空心楼盖</li>
      <li class="flex items-center gap-[5px]"><svg class="w-5 h-5"><use href="#folder"/></svg>楼梯</li>
      <li class="flex items-center gap-[5px]"><svg class="w-5 h-5"><use href="#folder"/></svg>装修</li>
      <li class="flex items-center gap-[5px]"><svg class="w-5 h-5"><use href="#folder"/></svg>土方</li>
      <li class="flex items-center gap-[5px]"><svg class="w-5 h-5"><use href="#folder"/></svg>基础</li>
      <li class="flex items-center gap-[5px]"><svg class="w-5 h-5"><use href="#folder"/></svg>其它</li>
      <li class="flex items-center gap-[5px]"><svg class="w-5 h-5"><use href="#folder"/></svg>自定义</li>
    </ul>
  </aside>

  <!-- component list and properties -->
  <div class="w-[349px] mr-[5px] shrink-0 flex flex-col">
    <section class="flex-1 min-h-0 flex flex-col border-x border-b border-[#c6c9cd]">
      <div class="h-[15px] shrink-0 pr-1.5 flex items-center justify-end bg-[#d3d4da] text-[#777]"><button aria-label="关闭构件列表"><svg class="block w-2 h-2"><use href="#cross"/></svg></button></div>
      <div class="h-7 shrink-0 flex bg-[#eeeeee] border-y border-[#c9ccd0]"><button class="w-[81px] pb-0.5 font-medium">构件列表</button><button class="w-[81px] pb-0.5 bg-[#dedede] border-x border-[#c4c7ca] text-[#85888b]">图纸管理</button></div>
      <div class="h-[35px] shrink-0 pl-1.5 pr-1 flex items-center bg-[#eeeeee] border-b border-[#c9ccd0] text-[#444]">
        <button class="w-[79px] flex items-center gap-[3px]"><svg class="w-5 h-5" viewBox="0 0 20 20"><path d="M4 3h9l5 5v11H4z" fill="#f4f4f4" stroke="#8b9299" stroke-width="1.300"/><path d="M13 3v5h5" fill="none" stroke="#8b9299"/><path d="M4 0v8M0 4h8M1 1l6 6M7 1L1 7" stroke="#f7a021" stroke-width="1.200"/></svg>新建<svg class="w-1.5 h-1 ml-[5px]"><use href="#caret"/></svg></button>
        <button class="w-[64px] flex items-center gap-[3px]"><svg class="w-5 h-5" viewBox="0 0 20 20"><path d="M1 15V1h8" fill="none" stroke="#8b9299" stroke-width="1.500"/><path d="M4 4h7l4 4v11H4z" fill="#dceafb" stroke="#4a8fdc" stroke-width="1.500"/><path d="M6 10h7M6 13h7M6 16h7" stroke="#4a8fdc" stroke-width="1.300"/></svg>复制</button>
        <button class="w-[65px] flex items-center gap-[3px]"><svg class="w-5 h-5" viewBox="0 0 20 20"><path d="M1 13V1h7M5 18V4h6l4 4v2" fill="none" stroke="#8b9299" stroke-width="1.400"/><path d="M10 10h9v9h-9z" fill="#e2474c"/><path d="M12 12l5 5M17 12l-5 5" stroke="#fff" stroke-width="1.500"/></svg>删除</button>
        <button class="flex items-center gap-[3px]"><svg class="w-5 h-5" viewBox="0 0 20 20"><path d="M1 9v10h7M4 6v10h8" fill="none" stroke="#f2762a" stroke-width="1.600"/><path d="M6 1h12v12H6z" fill="#b7d3f4" stroke="#4a8fdc" stroke-width="1.400"/></svg>层间复制</button>
        <button aria-label="更多" class="ml-auto"><svg class="block w-[10px] h-2" viewBox="0 0 10 8"><path d="M0 0l5 4-5 4zM5 0l5 4-5 4z" fill="#222"/></svg></button>
      </div>
      <label class="h-[23px] shrink-0 flex items-center pl-0.5 pr-2.5 border-b border-[#c9ccd0]"><input type="search" placeholder="搜索构件..." aria-label="搜索构件" class="flex-1 h-[22px] outline-none placeholder:text-[#7f8285]"><svg class="w-[13px] h-[13px]" viewBox="0 0 13 13"><circle cx="5.500" cy="5.500" r="4" fill="none" stroke="#3f97c9" stroke-width="1.800"/><path d="M8 8l4.500 4.500" stroke="#3f97c9" stroke-width="2.400"/></svg></label>
      <ul class="pt-[3px] leading-[30px]">
        <li class="pl-3 flex items-center gap-2"><svg class="w-2 h-2" viewBox="0 0 8 8"><path d="M8 0v8H0z" fill="#333"/></svg>构造柱</li>
        <li class="pl-[37px] flex items-center gap-2"><svg class="w-2 h-2" viewBox="0 0 8 8"><path d="M8 0v8H0z" fill="#333"/></svg>构造柱</li>
        <li class="ml-[75px] my-0.5 h-[26px] w-11 flex items-center justify-center bg-[#b3cdef]">GZ-1</li>
      </ul>
    </section>
    <section class="mt-[5px] shrink-0 flex flex-col border-x border-[#c6c9cd]">
      <div class="h-[15px] bg-[#d3d4da]"></div>
      <div class="h-7 flex bg-[#eeeeee] border-y border-[#c9ccd0]"><button class="w-[81px] pb-0.5 font-medium">属性列表</button><button class="w-[81px] pb-0.5 bg-[#dedede] border-x border-[#c4c7ca] text-[#85888b]">图层管理</button></div>
      <div class="h-[348px] flex border-b border-[#c6c9cd]">
        <table class="w-[328px] h-[341px] table-fixed border-separate border-spacing-0 [&_tr]:h-[26px] [&_td]:border-r [&_td]:border-b [&_td]:border-[#d4d5d7] [&_th]:border-r [&_th]:border-b [&_th]:border-[#c4c6c9] [&_th]:font-normal">
          <colgroup><col class="w-[27px]"><col class="w-[126px]"><col></colgroup>
          <thead><tr class="bg-[#efefef] text-[#555]"><th></th><th>属性名称</th><th class="bg-[#7fb8f9] text-white">属性值</th></tr></thead>
          <tbody>
            <tr><th class="bg-[#efefef] text-[#555]">14</th><td class="pl-1 text-[#2f6bf5]">混凝土强度等级</td><td class="pl-1">(C30)</td></tr>
            <tr><th class="bg-[#efefef] text-[#555]">15</th><td class="pl-1 text-[#2f6bf5]">混凝土外加剂</td><td class="pl-1">(无)</td></tr>
            <tr><th class="bg-[#efefef] text-[#555]">16</th><td class="pl-1 text-[#2f6bf5]">泵送类型</td><td class="pl-1">(混凝土泵)</td></tr>
            <tr><th class="bg-[#efefef] text-[#555]">17</th><td class="pl-1">泵送高度(m)</td><td class="pl-1">(-1)</td></tr>
            <tr><th class="bg-[#efefef] text-[#555]">18</th><td class="pl-1 text-[#2f6bf5]">截面周长(m)</td><td class="pl-1 bg-[#ebebeb] text-[#999]">1.7</td></tr>
            <tr><th class="bg-[#efefef] text-[#555]">19</th><td class="pl-1 text-[#2f6bf5]">截面面积(m²)</td><td class="pl-1 bg-[#ebebeb] text-[#999]">0.18</td></tr>
            <tr><th class="bg-[#efefef] text-[#555]">20</th><td class="pl-1">顶标高(m)</td><td class="pl-1">-1</td></tr>
            <tr><th class="bg-[#efefef] text-[#555]">21</th><td class="pl-1">底标高(m)</td><td class="pl-1">-2.3</td></tr>
            <tr><th class="bg-[#7fb8f9] text-white"><b>22</b></th><td class="pl-1">备注</td><td class="outline-2 -outline-offset-2 outline-[#7b7b7b]"></td></tr>
            <tr><th class="bg-[#efefef] text-[#555]">23</th><td class="pl-[3px]"><span class="flex items-center gap-1.5"><svg class="w-[17px] h-[17px]"><use href="#plusbox"/></svg>钢筋业务属性</span></td><td class="bg-[#ebebeb]"></td></tr>
            <tr><th class="bg-[#efefef] text-[#555]">37</th><td class="pl-[3px]"><span class="flex items-center gap-1.5"><svg class="w-[17px] h-[17px]"><use href="#plusbox"/></svg>土建业务属性</span></td><td class="bg-[#ebebeb]"></td></tr>
            <tr><th class="bg-[#efefef] text-[#555]">44</th><td class="pl-[3px]"><span class="flex items-center gap-1.5"><svg class="w-[17px] h-[17px]"><use href="#plusbox"/></svg>显示样式</span></td><td class="bg-[#ebebeb]"></td></tr>
          </tbody>
        </table>
        <div class="ml-[5px] mb-4.5 w-[11px] rounded-full bg-[#cbcbcb]"></div>
      </div>
      <div class="h-[37px] pl-1.5 flex items-center bg-[#eeeeee]"><button class="w-[100px] h-[30px] pb-0.5 bg-white border border-[#c9c9c9] rounded">截面编辑</button></div>
    </section>
  </div>

  <!-- drawing canvas -->
  <div class="relative flex-1 min-w-0 overflow-hidden bg-black">
    <svg class="absolute inset-0 w-full h-full" viewBox="622 208 1298 784" preserveAspectRatio="xMinYMin slice" fill="none">
      <rect x="727" y="208" width="975" height="784" fill="#606000"/>
      <path d="M726.500 208v784M1701.500 208v784" stroke="#a8a89c"/>
      <path d="M896 295h636" stroke="#b3b37e" stroke-width="2"/>
      <path d="M896.500 295v635h635.500V295" stroke="#d8d8b4"/>
      <g font-family="Lato, sans-serif" font-weight="100" font-size="44" fill="#d81ad0" stroke="#d81ad0" stroke-width=".5">
        <text x="717" y="341">4000</text>
        <text x="1565" y="341">4000</text>
      </g>
      <!-- member outlines -->
      <path d="M1000 443h101v85h-101z" fill="#1764ff" stroke="#8ba8ff" stroke-width="2"/>
      <path d="M1050 485.500h101v85h-101z" fill="#1764ff" stroke="#fff" stroke-width="1.500"/>
      <path d="M1101 485v43.500h-51" stroke="#8ba8ff" stroke-width="2"/>
      <rect x="1149" y="504" width="132" height="217" fill="#8a00ff"/>
      <path d="M1150.500 506.500h127.500v212h-127.500z" stroke="#d9b3ff" stroke-width="1.500"/>
      <path d="M1150 485.500h228M1278 485v85" stroke="#ecece0" stroke-width="1.500"/>
      <path d="M1378.500 485v85.500h-100M1171.500 719v100.500h85V719" stroke="#ecece0"/>
      <g stroke="#00ffff" stroke-opacity=".52" stroke-width="2">
        <path d="M900 496h246v64H900M1920 496h-637v64h637M1182 992V724h64V992M769 799v193M822 799v193"/>
      </g>
      <g stroke="#ff0000" stroke-opacity=".7" stroke-width="2">
        <path d="M1214 228v764"/>
        <path d="M900 612.500h1020" stroke-opacity=".6"/>
        <path d="M900 528h195M1174 528h80M1333 528h397M1811 528h79"/>
      </g>
      <path d="M796 830v80M796 990v2" stroke="#d81800"/>
      <path d="M1255 541l58-72" stroke="#801000" stroke-width="1.500"/>
      <path d="M1708 295h171M1890.500 491v501" stroke="#500000" stroke-width="2"/>
      <path d="M1702 504h209" stroke="#380000" stroke-width="2"/>
      <path d="M1702 721.500h209M1708 930.500h203" stroke="#7a0000" stroke-width="1.500"/>
      <path d="M1880 494l21 20M1880 602l21 20M1880 711l21 20M1880 920l21 20" stroke="#6a0000" stroke-width="1.500"/>
      <path d="M622 362.500h1298M1214.500 342v21M1204 373l21-21" stroke="#00ff00" stroke-opacity=".56" stroke-width="2"/>
      <!-- axis bubbles -->
      <path d="M1214 208.500L1223 211 1228 217 1229 222 1228 228 1223 234 1214 237 1205 234 1200 228 1199 222 1200 217 1205 211z" stroke="#009010" stroke-width="1.300"/>
      <path d="M1905 598L1914 601 1918 607 1919 612 1918 618 1914 624 1905 627 1896 624 1891 618 1890 612 1891 607 1896 601z" fill="#000" stroke="#009010" stroke-width="1.300"/>
      <path d="M1891 612.500h29" stroke="#a00000" stroke-width="2"/>
      <g font-family="Open Sans" font-size="23" fill="#fff" text-anchor="middle"><text x="1214" y="230">2</text><text x="1904" y="621">D</text></g>
      <!-- notes lettered vertically -->
      <g fill="#f2f2f2">
        <text transform="translate(628 1000) rotate(-90)" font-family="Lato" font-weight="100" font-size="37" stroke="#ddd" stroke-width=".4">010)/010</text>
        <text transform="translate(693 996) rotate(-90)" font-family="Noto Sans CJK SC" font-size="20">段板整体浇筑</text>
      </g>
      <!-- axis triad -->
      <path d="M684.500 930V910" stroke="#00ff00" stroke-width="5"/>
      <path d="M684.500 893l-6 20h12z" fill="#00ff00"/>
      <path d="M686 930.500h22" stroke="#ff0000" stroke-width="5"/>
      <path d="M722 930.500l-14-6v12z" fill="#ff0000"/>
      <ellipse cx="684.500" cy="930.500" rx="6.500" ry="7" fill="#0000b8"/>
      <g font-family="Open Sans" font-size="18" text-anchor="middle"><text x="684.500" y="890" fill="#00ee00">Y</text><text x="730.500" y="937" fill="#ff2000">X</text></g>
    </svg>

    <!-- view controls floating over the drawing -->
    <div class="absolute right-0 top-0 w-[41px] h-[283px] pt-[11px] flex flex-col items-center bg-[#989a9f] border border-[#c0c2c5] rounded-b text-[#3c4656]">
      <button aria-label="动态观察"><svg class="block w-[30px] h-[30px]" viewBox="0 0 30 30"><defs><linearGradient id="ball" x1="0" y1="0" x2="1" y2="1"><stop offset="0" stop-color="#f2f6fb"/><stop offset="1" stop-color="#64758f"/></linearGradient></defs><circle cx="15" cy="15" r="12" fill="url(#ball)" stroke="#53647c"/><path d="M2 22q12 0 22-13" fill="none" stroke="#3c4656" stroke-width="1.500"/><circle cx="25" cy="10" r="5" fill="url(#ball)" stroke="#53647c"/><circle cx="3" cy="22" r="2.500" fill="#777" stroke="#444"/></svg></button>
      <button aria-label="三维视图" class="mt-[7px]"><svg class="block w-[30px] h-[30px]" viewBox="0 0 30 30"><path d="M1 7l6-6h22v22l-6 6H1z" fill="#8494ad" stroke="#3c4656" stroke-width="1.400"/><path d="M1 7h22v22M23 7l6-6" fill="none" stroke="#3c4656" stroke-width="1.400"/><text x="8" y="26" font-size="11" font-family="Liberation Sans" fill="#2b3340">3D</text></svg></button>
      <button aria-label="俯视" class="mt-[7px]"><svg class="block w-[30px] h-[30px]" viewBox="0 0 30 30"><path d="M1 7l6-6h22v22l-6 6H1z" fill="#cfe3fb" stroke="#3c4656" stroke-width="1.400"/><path d="M1 7l6-6h22l-6 6z" fill="#8494ad" stroke="#3c4656" stroke-width="1.400"/><path d="M23 7v22M7 7v16h22M7 23l-6 6" fill="none" stroke="#3c4656" stroke-width="1.400"/></svg></button>
      <svg class="w-2 h-[5px] mt-[7px]"><use href="#caret"/></svg>
      <button aria-label="实体显示" class="mt-1.5"><svg class="block w-[30px] h-[30px]" viewBox="0 0 30 30"><path d="M1 7l6-6h22v22l-6 6H1z" fill="#8494ad" stroke="#3c4656" stroke-width="1.400"/><path d="M1 7h22v22M23 7l6-6" fill="none" stroke="#3c4656" stroke-width="1.400"/></svg></button>
      <svg class="w-2 h-[5px] mt-[7px]"><use href="#caret"/></svg>
      <button aria-label="旋转视图" class="mt-1.5"><svg class="block w-[30px] h-[30px]" viewBox="0 0 30 30"><path d="M26 21a12.500 12.500 0 1 1-1-13" fill="none" stroke="#3c4656" stroke-width="2.600"/><path d="M28 3v7h-8" fill="none" stroke="#3c4656" stroke-width="2.600"/></svg></button>
      <svg class="w-2 h-[5px] mt-[7px]"><use href="#caret"/></svg>
      <hr class="w-[30px] mt-1.5 border-[#6f737a]">
      <button aria-label="显示设置" class="mt-1.5"><svg class="block w-[30px] h-[30px]" viewBox="0 0 30 30"><path d="M1 5l3-4h22l3 4v24H1z" fill="#8494ad" stroke="#3c4656" stroke-width="1.400"/><path d="M1 5h28M15 12v13M4 8l2 3 3-4M18 8l2 3 3-4M9 15h3M9 20h3M9 25h3M23 15h3M23 20h3M23 25h3" fill="none" stroke="#3c4656" stroke-width="1.300"/><path d="M4 13h3v3H4zM4 18h3v3H4zM4 23h3v3H4zM18 13h3v3h-3zM18 18h3v3h-3zM18 23h3v3h-3z" fill="none" stroke="#3c4656"/></svg></button>
    </div>
  </div>
</main>

<!-- message dialog -->
<div role="dialog" aria-label="提示信息" class="absolute left-[441px] top-[389px] w-[503px] h-[409px] flex flex-col bg-[#efefef] border border-[#b9c3d3] border-t-0 shadow-[4px_4px_8px_rgba(0,0,0,0.55)]">
  <div class="h-[33px] -mx-px shrink-0 pl-[11px] pr-[13px] flex items-center justify-between bg-[#2d7de1] text-white"><h2>提示信息</h2><button aria-label="关闭对话框"><svg class="block w-[10px] h-[10px]"><use href="#cross"/></svg></button></div>
  <textarea readonly aria-label="信息内容" class="mt-3.5 mx-3.5 h-[311px] px-[5px] pt-[5px] resize-none bg-white border border-[#3d8fd8] outline-none">GZ-1 不能与 DZ5（ID 为 17486）重叠布置</textarea>
  <button class="mt-[7px] mr-3.5 self-end w-[94px] h-[29px] rounded bg-[#2d7de1] text-white">关闭</button>
</div>

<footer class="h-9 shrink-0 pl-[3px] pr-[41px] flex items-center bg-[#dddddf] text-[#3c3c3c]">
  <span class="w-[328px]">X = 20064 Y = 51616</span>
  <span class="w-[50px]">层高：</span><span class="w-[54px]">4</span>
  <span class="w-[51px]">标高：</span><span class="w-[115px]">-4~0</span>
  <span class="w-[129px]">1(1)</span>
  <span class="w-[45px]">隐藏：</span><span class="w-[83px]">0</span>
  <div class="flex gap-1">
    <button aria-label="正交" class="w-8 h-[31px] flex items-center justify-center bg-[#cfcfd1] border border-[#a9a9ab]"><svg class="w-5 h-5" viewBox="0 0 20 20" fill="none" stroke="#444" stroke-width="1.500"><path d="M3 2v16h15M3 12h5v6"/></svg></button>
    <button aria-label="捕捉" class="w-[45px] h-[31px] flex items-center justify-center gap-2 bg-white border-2 border-[#5aa7f7] text-[#555]"><svg class="w-5 h-5" viewBox="0 0 20 20"><path d="M3 3h15v15H3z" fill="#fff" stroke="#4a8fdc" stroke-width="1.700"/><path d="M0 0h6v6H0z" fill="#f58a3c"/></svg><svg class="w-1.5 h-1"><use href="#caret"/></svg></button>
    <button aria-label="交点" class="w-8 h-[31px] ml-[3px] flex items-center justify-center bg-[#cfcfd1] border border-[#a9a9ab]"><svg class="w-5 h-5" viewBox="0 0 20 20"><path d="M1 1l18 18M19 1L1 19" stroke="#888" stroke-width="1.300"/><path d="M8 8h4v4H8z" fill="#777"/></svg></button>
    <button aria-label="角度" class="w-[45px] h-[31px] ml-[3px] flex items-center justify-center gap-2 bg-[#cfcfd1] border border-[#a9a9ab] text-[#555]"><svg class="w-5 h-5" viewBox="0 0 20 20"><path d="M15 2L2 17h17" fill="none" stroke="#444" stroke-width="1.500"/><circle cx="9" cy="9" r="2.200" fill="#444"/></svg><svg class="w-1.5 h-1"><use href="#caret"/></svg></button>
    <button aria-label="偏移输入" class="w-[45px] h-[31px] flex items-center justify-center gap-2 bg-[#cfcfd1] border border-[#a9a9ab] text-[#555]"><svg class="w-5 h-5" viewBox="0 0 20 20"><path d="M4 2v8M0 6h8" stroke="#444" stroke-width="1.500"/><path d="M8 13h12v5H8z" fill="#444"/></svg><svg class="w-1.5 h-1"><use href="#caret"/></svg></button>
    <button class="w-[91px] h-[31px] bg-[#cfcfd1] border border-[#a9a9ab]">跨图层选择</button>
    <button class="w-[75px] h-[31px] bg-[#cfcfd1] border border-[#a9a9ab]">折线选择</button>
  </div>
  <span class="ml-[9px]">鼠标左键指定插入点</span>
  <span class="ml-auto">62.5 FPS</span>
</footer>
<div class="h-3 shrink-0 flex bg-[#d8dadd] border-t-2 border-white overflow-hidden">
  <div class="ml-[61px] w-[429px] bg-white border border-b-0 border-[#c3c5c8]"></div>
  <div class="ml-[768px] w-40 bg-[#f1f1f1]"></div>
  <span class="ml-auto mr-[98px] pt-0.5 text-[#222]">9:25</span>
</div>
</body>
</html>
